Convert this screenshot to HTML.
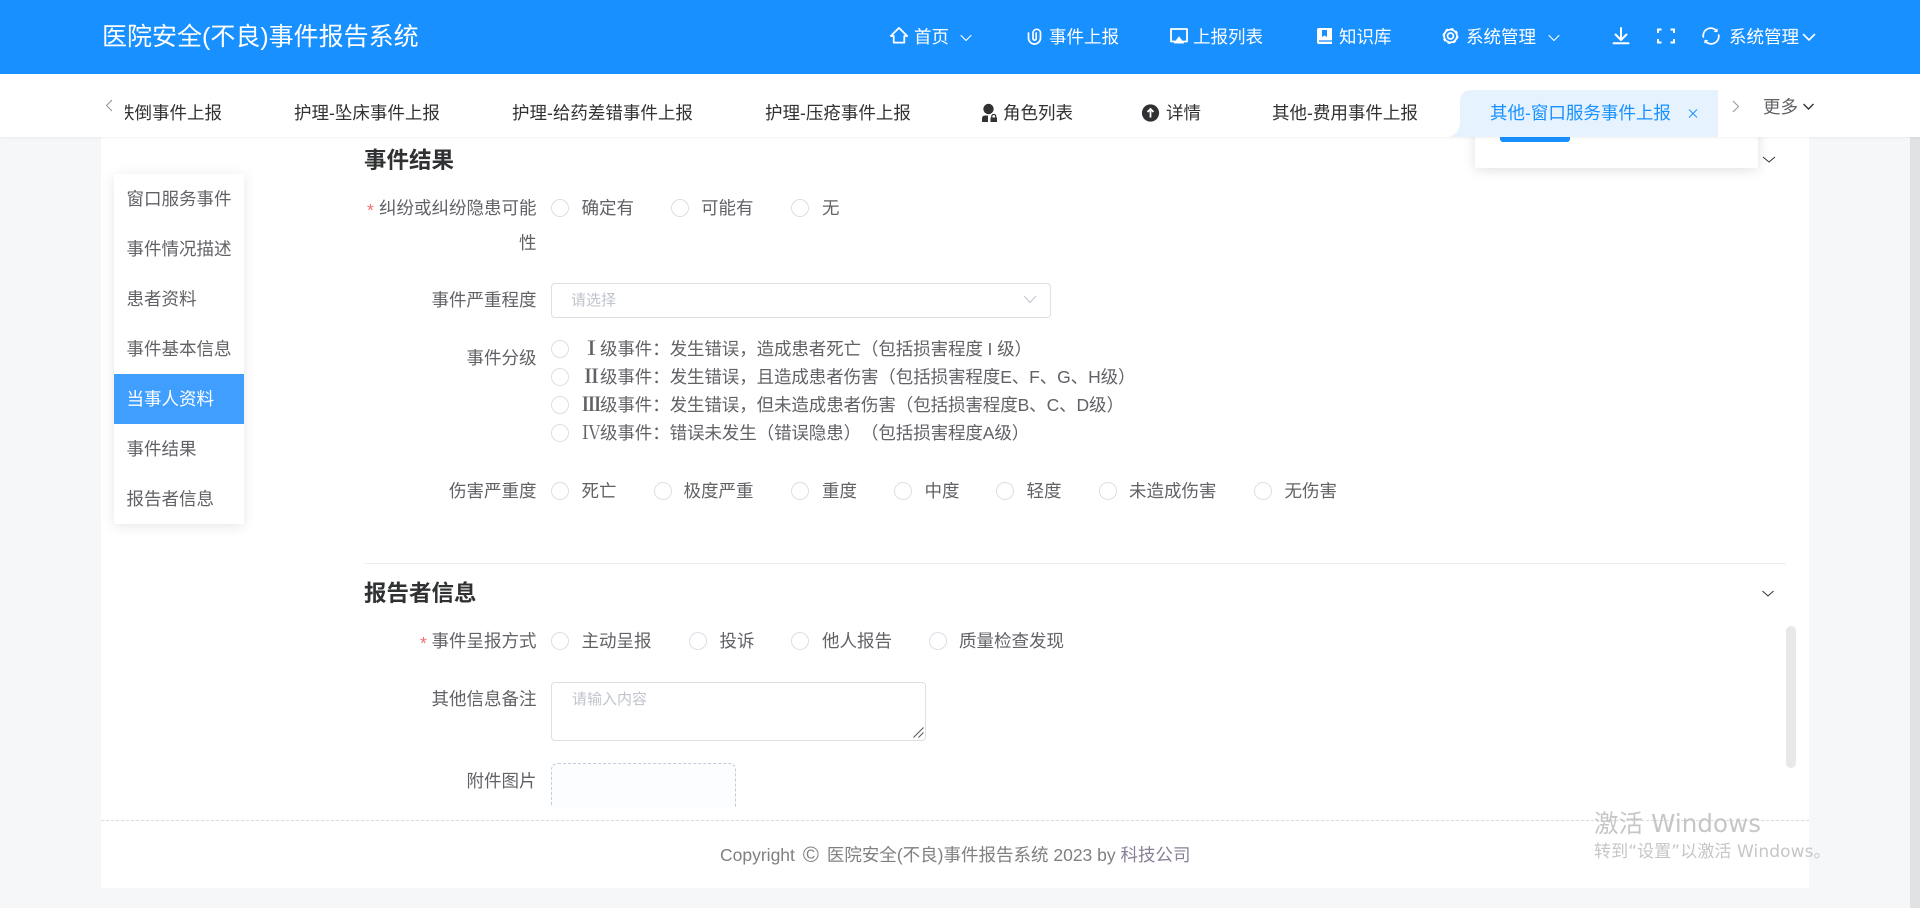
<!DOCTYPE html>
<html lang="zh-CN">
<head>
<meta charset="utf-8">
<title>医院安全(不良)事件报告系统</title>
<style>
html,body{margin:0;padding:0;width:1920px;height:908px;overflow:hidden;background:#f6f7f9;}
body{position:relative;font-family:"Liberation Sans","Noto Sans CJK SC",sans-serif;font-size:17.5px;color:#606266;text-spacing-trim:space-all;}
.a{position:absolute;}
.t{position:absolute;white-space:nowrap;height:30px;line-height:30px;}
.l{left:236.5px;width:300px;text-align:right;}
.r{position:absolute;width:16px;height:16px;border:1px solid #dcdfe6;border-radius:50%;background:#fff;left:551px;}
.n{color:#fff;top:22px;}
.tb{color:#303133;top:98px;}
.h{font-size:22.5px;font-weight:bold;color:#303133;}
.s{color:#606266;left:126.5px;}
.rm{display:inline-block;width:18px;text-align:center;font-family:"Noto Serif CJK SC",serif;font-size:19px;font-weight:bold;letter-spacing:0;line-height:20px;}
.lv{letter-spacing:-.1px;}
svg{position:absolute;left:0;top:0;overflow:visible;}
</style>
</head>
<body>
<!-- content -->
<div class="a" style="left:101px;top:137px;width:1708px;height:751px;background:#fff;"></div>
<div class="a" style="left:1910px;top:137px;width:10px;height:771px;background:#e0e2e4;"></div>

<!-- sidebar -->
<div class="a" style="left:114px;top:174px;width:130px;height:350px;background:#fff;box-shadow:0 2px 12px rgba(0,0,0,.1);"></div>
<div class="a" style="left:114px;top:374px;width:130px;height:50px;background:#409eff;"></div>
<div class="t s" style="top:184px;">窗口服务事件</div>
<div class="t s" style="top:234px;">事件情况描述</div>
<div class="t s" style="top:284px;">患者资料</div>
<div class="t s" style="top:334px;">事件基本信息</div>
<div class="t s" style="top:384px;color:#fff;">当事人资料</div>
<div class="t s" style="top:434px;">事件结果</div>
<div class="t s" style="top:484px;">报告者信息</div>

<!-- section 1 -->
<div class="t h" style="left:364px;top:146px;">事件结果</div>
<div class="t" style="left:367px;top:195px;color:#f56c6c;">*</div>
<div class="t l" style="top:193px;">纠纷或纠纷隐患可能</div>
<div class="t l" style="top:228px;">性</div>
<div class="r" style="top:199px;"></div><div class="t" style="left:581.5px;top:193px;">确定有</div>
<div class="r" style="top:199px;left:671px;"></div><div class="t" style="left:701px;top:193px;">可能有</div>
<div class="r" style="top:199px;left:791px;"></div><div class="t" style="left:822px;top:193px;">无</div>

<div class="t l" style="top:285px;">事件严重程度</div>
<div class="a" style="left:551px;top:283px;width:498px;height:33px;border:1px solid #dcdfe6;border-radius:4px;background:#fff;"></div>
<div class="t" style="left:571px;top:286px;font-size:15px;color:#c0c4cc;">请选择</div>

<div class="t l" style="top:343px;">事件分级</div>
<div class="r" style="top:340px;"></div><div class="t lv" style="left:582px;top:334px;"><span class="rm">Ⅰ</span>级事件：发生错误，造成患者死亡（包括损害程度 I 级）</div>
<div class="r" style="top:368px;"></div><div class="t lv" style="left:582px;top:362px;"><span class="rm">Ⅱ</span>级事件：发生错误，且造成患者伤害（包括损害程度E、F、G、H级）</div>
<div class="r" style="top:396px;"></div><div class="t lv" style="left:582px;top:390px;"><span class="rm">Ⅲ</span>级事件：发生错误，但未造成患者伤害（包括损害程度B、C、D级）</div>
<div class="r" style="top:424px;"></div><div class="t lv" style="left:582px;top:418px;"><span class="rm" style="font-weight:normal;">Ⅳ</span>级事件：错误未发生（错误隐患）（包括损害程度A级）</div>

<div class="t l" style="top:476px;">伤害严重度</div>
<div class="r" style="top:482px;"></div><div class="t" style="left:581.5px;top:476px;">死亡</div>
<div class="r" style="top:482px;left:654px;"></div><div class="t" style="left:683.5px;top:476px;">极度严重</div>
<div class="r" style="top:482px;left:791px;"></div><div class="t" style="left:822px;top:476px;">重度</div>
<div class="r" style="top:482px;left:894px;"></div><div class="t" style="left:924.5px;top:476px;">中度</div>
<div class="r" style="top:482px;left:996px;"></div><div class="t" style="left:1026.5px;top:476px;">轻度</div>
<div class="r" style="top:482px;left:1099px;"></div><div class="t" style="left:1129px;top:476px;">未造成伤害</div>
<div class="r" style="top:482px;left:1254px;"></div><div class="t" style="left:1284.5px;top:476px;">无伤害</div>

<div class="a" style="left:364px;top:563px;width:1422px;height:1px;background:#ebeef5;"></div>

<!-- section 2 -->
<div class="t h" style="left:364px;top:579px;">报告者信息</div>
<div class="a" style="left:1786px;top:626px;width:10px;height:142px;border-radius:5px;background:#e8e8e8;"></div>
<div class="t" style="left:420px;top:628px;color:#f56c6c;">*</div>
<div class="t l" style="top:626px;">事件呈报方式</div>
<div class="r" style="top:632px;"></div><div class="t" style="left:581.5px;top:626px;">主动呈报</div>
<div class="r" style="top:632px;left:689px;"></div><div class="t" style="left:719.5px;top:626px;">投诉</div>
<div class="r" style="top:632px;left:791px;"></div><div class="t" style="left:822px;top:626px;">他人报告</div>
<div class="r" style="top:632px;left:929px;"></div><div class="t" style="left:959px;top:626px;">质量检查发现</div>

<div class="t l" style="top:684px;">其他信息备注</div>
<div class="a" style="left:551px;top:682px;width:373px;height:57px;border:1px solid #dcdfe6;border-radius:4px;background:#fff;"></div>
<div class="t" style="left:572px;top:685px;font-size:15px;color:#c0c4cc;">请输入内容</div>

<div class="t l" style="top:766px;">附件图片</div>
<div class="a" style="left:551px;top:763px;width:185px;height:44px;overflow:hidden;">
  <div style="width:183px;height:80px;border:1px dashed #c0ccda;border-radius:7px;background:#fbfdff;"></div>
</div>

<!-- footer -->
<div class="a" style="left:101px;top:820px;width:1708px;height:0;border-top:1px dashed #d8dce5;"></div>
<div class="t" style="left:720px;top:840px;color:#808080;">Copyright <span style="font-size:22px;margin:0 3px;line-height:20px;position:relative;top:1px;">©</span> 医院安全(不良)事件报告系统 2023 by <span style="color:#8a7f95;">科技公司</span></div>

<!-- popup behind tabs -->
<div class="a" style="left:1475px;top:120px;width:283px;height:48px;background:#fff;border-radius:2px;box-shadow:0 2px 12px rgba(0,0,0,.12);"></div>
<div class="a" style="left:1500px;top:120px;width:70px;height:22px;background:#1890ff;border-radius:3px;"></div>

<!-- header -->
<div class="a" style="left:0;top:0;width:1920px;height:74px;background:#1890ff;"></div>
<div class="t" style="left:102px;top:22px;font-size:25px;color:#fff;">医院安全(不良)事件报告系统</div>
<div class="t n" style="left:914px;">首页</div>
<div class="t n" style="left:1049px;">事件上报</div>
<div class="t n" style="left:1193px;">上报列表</div>
<div class="t n" style="left:1339px;">知识库</div>
<div class="t n" style="left:1466px;">系统管理</div>
<div class="t n" style="left:1729px;">系统管理</div>

<!-- tab bar -->
<div class="a" style="left:0;top:74px;width:1920px;height:63px;background:#fff;box-shadow:0 1px 3px rgba(0,0,0,.06);"></div>
<div class="a" style="left:125px;top:98px;width:97px;height:30px;overflow:hidden;">
  <div class="t" style="right:0;top:0;color:#303133;">护理-跌倒事件上报</div>
</div>
<div class="t tb" style="left:294px;">护理-坠床事件上报</div>
<div class="t tb" style="left:512px;">护理-给药差错事件上报</div>
<div class="t tb" style="left:765px;">护理-压疮事件上报</div>
<div class="t tb" style="left:1003px;">角色列表</div>
<div class="t tb" style="left:1166px;">详情</div>
<div class="t tb" style="left:1272px;">其他-费用事件上报</div>
<div class="t" style="left:1763px;top:92px;color:#606266;">更多</div>

<svg width="1920" height="908" viewBox="0 0 1920 908" fill="none">
  <!-- active tab -->
  <path d="M1448 137 Q1460 134 1460 122 V102 Q1460 90 1472 90 H1718 V137 Z" fill="#e6f3ff"/>

  <!-- header icons -->
  <g stroke="#fff" stroke-width="1.8" stroke-linejoin="round" stroke-linecap="round">
    <path d="M890.8 36 L899 27.9 L907.2 36 H904.3 V42.6 H893.7 V36 Z"/>
    <path d="M961 35.5 L966 40.5 L971 35.5" stroke-width="1.1"/>
    <path d="M1028.5 33 V38 A6 6 0 0 0 1040.5 38 V32.5 A3.8 3.8 0 0 0 1033 32.5 V38.5 A1.6 1.6 0 0 0 1036.2 38.5 V33" stroke-width="1.7"/>
    <path d="M1175 41.5 H1171 V29 H1187 V41.5 H1183"/>
    <path d="M1179 37 L1183.5 43 H1174.5 Z" fill="#fff" stroke-width="1"/>
    <path d="M1549 35.5 L1554 40.5 L1559 35.5" stroke-width="1.1"/>
    <path d="M1621 28 V39.5 M1615.5 34.5 L1621 40 L1626.5 34.5" stroke-width="2"/>
    <path d="M1613.5 43.3 H1628.5" stroke-width="2"/>
    <path d="M1658 33 V29.5 H1661.5 M1670.5 29.5 H1674 V33 M1674 39 V42.5 H1670.5 M1661.5 42.5 H1658 V39" stroke-width="2" stroke-linecap="butt" stroke-linejoin="miter"/>
    <path d="M1703.3 37 A7.6 7.6 0 0 1 1716.5 30.7 M1718.7 35 A7.6 7.6 0 0 1 1705.5 41.3" stroke-width="1.7"/>
    <path d="M1717 29.2 V31.5 H1714.7 M1705 42.8 V40.5 H1707.3" stroke-width="1.2"/>
    <path d="M1803.5 34.5 L1809 40 L1814.5 34.5" stroke-width="1.6"/>
  </g>
  <path d="M1319 28 H1332 V44 H1319 Q1317 44 1317 42 V30 Q1317 28 1319 28 Z" fill="#fff"/>
  <path d="M1322 30 H1327 V37 L1324.5 35.5 L1322 37 Z" fill="#1890ff"/>
  <path d="M1319 41 H1332" stroke="#1890ff" stroke-width="1.3"/>
  <!-- gear -->
  <circle cx="1450.5" cy="36" r="6.4" stroke="#fff" stroke-width="1.8"/>
  <circle cx="1450.5" cy="36" r="7.2" stroke="#fff" stroke-width="1.6" stroke-dasharray="2.8 2.85"/>
  <circle cx="1450.5" cy="36" r="3" stroke="#fff" stroke-width="1.7"/>

  <!-- tab icons -->
  <circle cx="988.5" cy="109" r="5.2" fill="#303133"/>
  <path d="M982 122 V118.5 Q982 115.5 985 115.5 H988 V122 Z" fill="#303133"/>
  <rect x="990.5" y="117.5" width="6.5" height="4.5" fill="#303133"/>
  <path d="M991.8 117.5 V116 A2 2 0 0 1 995.7 116 V117.5" stroke="#303133" stroke-width="1.2"/>
  <circle cx="1150.5" cy="113" r="8.6" fill="#303133"/>
  <path d="M1150.5 117.5 V109.5 M1147.5 112 L1150.5 109 L1153.5 112" stroke="#fff" stroke-width="1.8"/>
  <!-- tab arrows -->
  <path d="M112 100 L106.5 105.5 L112 111" stroke="#909399" stroke-width="1"/>
  <path d="M1733 101 L1738.5 106.5 L1733 112" stroke="#909399" stroke-width="1"/>
  <path d="M1803.5 104 L1808.5 109 L1813.5 104" stroke="#303133" stroke-width="1.4"/>
  <path d="M1689 109.5 L1697 117.5 M1697 109.5 L1689 117.5" stroke="#1890ff" stroke-width="1"/>

  <!-- form chevrons -->
  <path d="M1024 296 L1030 302.5 L1036 296" stroke="#c0c4cc" stroke-width="1"/>
  <path d="M1763 157 L1769 162 L1775 157" stroke="#303133" stroke-width="1"/>
  <path d="M1762.5 591 L1768 596 L1773.5 591" stroke="#303133" stroke-width="1"/>
  <!-- textarea resizer -->
  <path d="M913.5 737.5 L923.5 727.5 M918.5 737.5 L923.5 732.5" stroke="#555" stroke-width="1"/>
</svg>

<div class="t" style="left:1490px;top:98px;color:#1890ff;">其他-窗口服务事件上报</div>

<!-- windows watermark -->
<div class="t" style="left:1594px;top:809px;font-family:'DejaVu Sans','Noto Sans CJK SC',sans-serif;font-size:24.5px;color:#c6c6c6;letter-spacing:.1px;">激活 Windows</div>
<div class="t" style="left:1594px;top:837px;font-family:'DejaVu Sans','Noto Sans CJK SC',sans-serif;font-size:17px;color:#c6c6c6;letter-spacing:.1px;">转到“设置”以激活 Windows。</div>
</body>
</html>
